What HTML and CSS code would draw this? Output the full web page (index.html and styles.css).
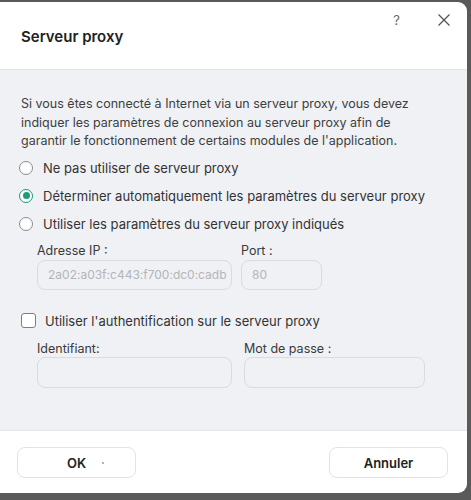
FILE: index.html
```html
<!DOCTYPE html>
<html lang="fr">
<head>
<meta charset="utf-8">
<title>Serveur proxy</title>
<link rel="stylesheet" href="styles.css">
</head>
<body>
<div class="dialog">
  <header class="head">
    <h1 class="title">Serveur proxy</h1>
    <div class="tools">
      <span class="help">?</span>
      <svg class="close" width="14" height="14" viewBox="0 0 14 14"><path d="M1.5 1.5 L12.5 12.5 M12.5 1.5 L1.5 12.5" stroke="#555" stroke-width="1.3" fill="none"/></svg>
    </div>
  </header>
  <main class="body">
    <p class="desc">Si vous êtes connecté à Internet via un serveur proxy, vous devez indiquer les paramètres de connexion au serveur proxy afin de garantir le fonctionnement de certains modules de l'application.</p>
    <div class="radios">
      <div class="row"><span class="radio"></span><span>Ne pas utiliser de serveur proxy</span></div>
      <div class="row"><span class="radio on"></span><span>Déterminer automatiquement les paramètres du serveur proxy</span></div>
      <div class="row"><span class="radio"></span><span>Utiliser les paramètres du serveur proxy indiqués</span></div>
    </div>
    <div class="fields f1">
      <div class="field ip"><div class="lbl">Adresse IP :</div><div class="inp">2a02:a03f:c443:f700:dc0:cadb</div></div>
      <div class="field port"><div class="lbl">Port :</div><div class="inp">80</div></div>
    </div>
    <div class="row check-row"><span class="check"></span><span>Utiliser l'authentification sur le serveur proxy</span></div>
    <div class="fields f2">
      <div class="field ip"><div class="lbl">Identifiant:</div><div class="inp"></div></div>
      <div class="field pw"><div class="lbl">Mot de passe :</div><div class="inp"></div></div>
    </div>
  </main>
  <footer class="foot">
    <button class="btn">OK<span class="dot"></span></button>
    <button class="btn">Annuler</button>
  </footer>
</div>
</body>
</html>
```

FILE: styles.css
```css
html, body { margin: 0; padding: 0; }
body {
  background: #5a5a5a;
  width: 471px;
  height: 500px;
  overflow: hidden;
  font-family: Inter, "Noto Sans", sans-serif;
  color: #3a3a3a;
}
.dialog {
  margin-top: 2px;
  width: 467px;
  height: 491px;
  background: #fff;
  border-radius: 0 9px 9px 0;
  overflow: hidden;
  display: flex;
  flex-direction: column;
}
.head {
  height: 67px;
  border-bottom: 1px solid #dfe2e8;
  display: flex;
  justify-content: space-between;
  padding-left: 21px;
  box-sizing: content-box;
}
.title {
  margin: 0;
  padding-top: 26px;
  font-size: 15px;
  font-weight: 600;
  line-height: 18px;
  color: #222;
}
.tools {
  display: flex;
  align-items: flex-start;
  padding-top: 10px;
  padding-right: 16px;
  gap: 37px;
}
.help {
  font-size: 13px;
  color: #666;
  line-height: 16px;
}
.close { margin-top: 1px; }
.body {
  flex: 1;
  background: #eff1f5;
  padding: 25px 0 0 21px;
  border-bottom: 1px solid #e2e5ea;
  font-size: 12.5px;
}
.desc {
  margin: 0;
  width: 402px;
  line-height: 18.5px;
  color: #3e3e3e;
}
.radios { margin-top: 3px; font-size: 13px; }
.row {
  height: 28px;
  display: flex;
  align-items: center;
  gap: 10px;
  color: #333;
}
.radio {
  width: 12px;
  height: 12px;
  border: 1.5px solid #8a8c90;
  border-radius: 50%;
  margin-left: -2px;
  background: #fff;
  flex: none;
  position: relative;
}
.radio.on {
  border-color: #169c78;
  background: #fff;
}
.radio.on::after {
  content: "";
  position: absolute;
  left: 2.5px; top: 2.5px;
  width: 7px; height: 7px;
  border-radius: 50%;
  background: #1a9c78;
}
.fields {
  display: flex;
  padding-left: 16px;
}
.f1 { gap: 9px; margin-top: 5px; }
.f2 { gap: 12px; margin-top: 10px; }
.lbl {
  height: 16px;
  line-height: 16px;
  margin-bottom: 1px;
  color: #3a3a3a;
}
.f2 .lbl { margin-bottom: 0; }
.inp {
  box-sizing: border-box;
  height: 30px;
  border: 1px solid #d8dbe0;
  border-radius: 8px;
  padding-left: 10px;
  line-height: 28px;
  font-size: 12px;
  color: #b3b5b9;
  white-space: nowrap;
  overflow: hidden;
}
.f2 .inp { height: 31px; }
.ip { width: 195px; }
.port { width: 81px; }
.pw { width: 181px; }
.check-row { margin-top: 21px; height: 20px; font-size: 13px; gap: 9px; }
.check {
  width: 13px;
  height: 13px;
  border: 1.5px solid #7d7f83;
  border-radius: 3px;
  background: #fff;
  flex: none;
}
.foot {
  height: 62px;
  display: flex;
  justify-content: space-between;
  align-items: flex-start;
  padding: 16px 19px 0 17px;
  box-sizing: border-box;
}
.btn {
  width: 119px;
  height: 31px;
  border: 1px solid #e1e3e7;
  border-radius: 8px;
  background: #fff;
  font-family: Inter, "Noto Sans", sans-serif;
  font-size: 13px;
  font-weight: 600;
  color: #222;
  position: relative;
}
.dot {
  position: absolute;
  left: 84px;
  top: 14px;
  width: 2px;
  height: 2px;
  border-radius: 50%;
  background: #999;
}
```
